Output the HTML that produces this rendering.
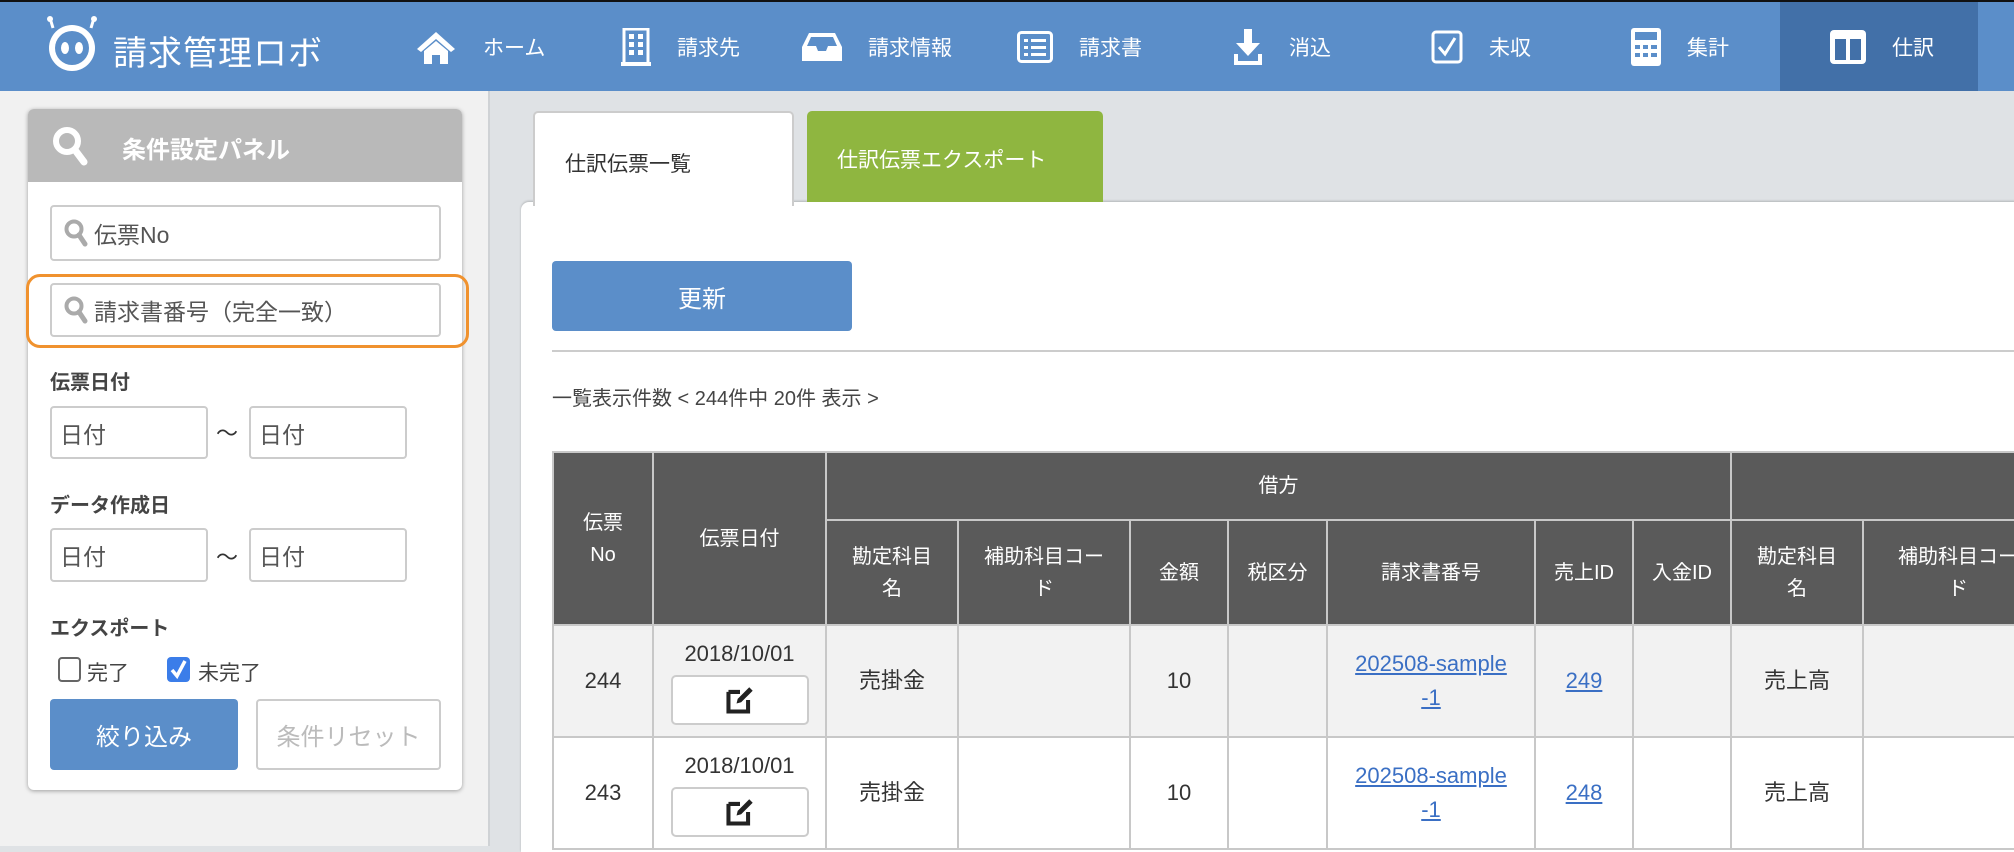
<!DOCTYPE html>
<html><head><meta charset="utf-8"><style>
*{box-sizing:border-box;margin:0;padding:0}
body{width:2014px;height:846px;overflow:hidden;background:#dfe2e5;font-family:"Liberation Sans","Noto Sans CJK JP",sans-serif;position:relative;color:#333}
.a{position:absolute}
#hdr{left:0;top:0;width:2014px;height:91px;background:#5b8ec9;border-top:2px solid #111}
.nav{position:absolute;top:0;height:89px;display:flex;align-items:center;color:#fff;font-size:21px}
.nav svg{margin-right:26px}
#side{left:0;top:91px;width:490px;height:755px;background:#f1f1f1;border-right:2px solid #cfd2d5}
#panel{left:28px;top:109px;width:434px;height:681px;background:#fff;border-radius:6px;box-shadow:0 1px 4px rgba(0,0,0,.35);overflow:hidden}
#ph{left:0;top:0;width:434px;height:73px;background:#b9b9b9;color:#fff;font-weight:bold;font-size:24px}
.inp{position:absolute;background:#fff;border:2px solid #ccc;border-radius:4px;font-size:23px;color:#555;display:flex;align-items:center}
.lbl{position:absolute;font-size:20px;font-weight:bold;color:#444}
table{border-collapse:collapse;position:absolute;left:552px;top:451px;table-layout:fixed;width:1500px}
td,th{border:2px solid #c8c8c8;text-align:center;font-size:20px;font-weight:normal;line-height:32px}
td{font-size:22px;line-height:34px}
th{background:#5a5a5a;color:#fff}
td{color:#333}
a{color:#3a6fc4;text-decoration:underline}
.eb{display:inline-flex;width:138px;height:50px;border:2px solid #ccc;border-radius:5px;background:#fff;align-items:center;justify-content:center;margin-top:4px}
</style></head><body>
<div id="hdr" class="a">
 <div class="a" style="left:44px;top:14px">
  <svg width="56" height="56" viewBox="0 0 56 56"><line x1="9" y1="12" x2="6" y2="2" stroke="#fff" stroke-width="3"/><line x1="47" y1="12" x2="50" y2="2" stroke="#fff" stroke-width="3"/><circle cx="6" cy="3" r="3" fill="#fff"/><circle cx="50" cy="3" r="3" fill="#fff"/><circle cx="28" cy="32" r="23" fill="#fff"/><circle cx="28" cy="32" r="17" fill="#5b8ec9"/><ellipse cx="21" cy="32" rx="4" ry="6" fill="#fff"/><ellipse cx="35" cy="32" rx="4" ry="6" fill="#fff"/></svg>
 </div>
 <div class="a" style="left:113px;top:24px;color:#fff;font-size:34px;letter-spacing:1px">請求管理ロボ</div>
 <div class="nav" style="left:415px"><svg width="42" height="34" viewBox="0 0 42 34"><path d="M21 2 L2 19 L6 22 L21 9 L36 22 L40 19 Z M9 21 V34 H17 V25 H25 V34 H33 V21 L21 11 Z" fill="#fff"/></svg>ホーム</div>
 <div class="nav" style="left:621px"><svg width="30" height="38" viewBox="0 0 30 38"><rect x="3" y="1" width="24" height="35" fill="none" stroke="#fff" stroke-width="3"/><rect x="0" y="34" width="30" height="4" fill="#fff"/><g fill="#fff"><rect x="8" y="6" width="5" height="5"/><rect x="17" y="6" width="5" height="5"/><rect x="8" y="14" width="5" height="5"/><rect x="17" y="14" width="5" height="5"/><rect x="8" y="22" width="5" height="5"/><rect x="17" y="22" width="5" height="5"/></g></svg>請求先</div>
 <div class="nav" style="left:802px"><svg width="40" height="32" viewBox="0 0 40 32"><path d="M7 2 H33 L40 16 V30 H0 V16 Z" fill="#fff"/><path d="M9 6 H31 L35 15 H26 L24 20 H16 L14 15 H5 Z" fill="#5b8ec9"/></svg>請求情報</div>
 <div class="nav" style="left:1017px"><svg width="36" height="32" viewBox="0 0 36 32"><rect x="1.5" y="1.5" width="33" height="29" rx="3" fill="none" stroke="#fff" stroke-width="3"/><g fill="#fff"><rect x="7" y="8" width="4" height="3"/><rect x="14" y="8" width="15" height="3"/><rect x="7" y="15" width="4" height="3"/><rect x="14" y="15" width="15" height="3"/><rect x="7" y="22" width="4" height="3"/><rect x="14" y="22" width="15" height="3"/></g></svg>請求書</div>
 <div class="nav" style="left:1233px"><svg width="30" height="38" viewBox="0 0 30 38"><path d="M11 1 H19 V15 H27 L15 28 L3 15 H11 Z" fill="#fff"/><path d="M3 26 V35 H27 V26" fill="none" stroke="#fff" stroke-width="4"/></svg>消込</div>
 <div class="nav" style="left:1431px"><svg width="32" height="34" viewBox="0 0 32 34"><rect x="2" y="2" width="28" height="30" rx="3" fill="none" stroke="#fff" stroke-width="3"/><path d="M8 17 L14 24 L24 8" fill="none" stroke="#fff" stroke-width="3"/></svg>未収</div>
 <div class="nav" style="left:1631px"><svg width="30" height="38" viewBox="0 0 30 38"><rect x="0" y="0" width="30" height="38" rx="3" fill="#fff"/><rect x="4" y="4" width="22" height="8" fill="#5b8ec9"/><g fill="#5b8ec9"><rect x="4" y="17" width="5" height="4"/><rect x="12" y="17" width="5" height="4"/><rect x="20" y="17" width="6" height="4"/><rect x="4" y="25" width="5" height="4"/><rect x="12" y="25" width="5" height="4"/><rect x="20" y="25" width="6" height="4"/></g></svg>集計</div>
 <div class="a" style="left:1780px;top:0;width:198px;height:89px;background:#4270a8"></div>
 <div class="nav" style="left:1830px"><svg width="36" height="34" viewBox="0 0 36 34"><rect x="0" y="0" width="36" height="34" rx="4" fill="#fff"/><rect x="5" y="9" width="11" height="21" fill="#4270a8"/><rect x="20" y="9" width="11" height="21" fill="#4270a8"/></svg>仕訳</div>
</div>

<div id="side" class="a"></div>
<div id="panel" class="a">
 <div id="ph" class="a"><svg class="a" style="left:24px;top:17px" width="36" height="40" viewBox="0 0 36 40"><circle cx="15" cy="15" r="11" fill="none" stroke="#fff" stroke-width="6"/><line x1="23" y1="24" x2="32" y2="36" stroke="#fff" stroke-width="7" stroke-linecap="round"/></svg><span class="a" style="left:94px;top:21px">条件設定パネル</span></div>
</div>
<div class="inp" style="left:50px;top:205px;width:391px;height:56px"><svg style="margin:0 6px 0 12px" width="24" height="28" viewBox="0 0 24 28"><circle cx="10" cy="10" r="7.5" fill="none" stroke="#aaa" stroke-width="4"/><line x1="15" y1="16" x2="21" y2="25" stroke="#aaa" stroke-width="5" stroke-linecap="round"/></svg>伝票No</div>
<div class="a" style="left:26px;top:274px;width:443px;height:74px;border:3px solid #f0922e;border-radius:14px"></div>
<div class="inp" style="left:50px;top:283px;width:391px;height:54px"><svg style="margin:0 6px 0 12px" width="24" height="28" viewBox="0 0 24 28"><circle cx="10" cy="10" r="7.5" fill="none" stroke="#aaa" stroke-width="4"/><line x1="15" y1="16" x2="21" y2="25" stroke="#aaa" stroke-width="5" stroke-linecap="round"/></svg>請求書番号（完全一致）</div>
<div class="lbl" style="left:50px;top:366px">伝票日付</div>
<div class="inp" style="left:50px;top:406px;width:158px;height:53px;padding-left:8px">日付</div>
<div class="a" style="left:216px;top:416px;font-size:22px">～</div>
<div class="inp" style="left:249px;top:406px;width:158px;height:53px;padding-left:8px">日付</div>
<div class="lbl" style="left:50px;top:489px">データ作成日</div>
<div class="inp" style="left:50px;top:528px;width:158px;height:54px;padding-left:8px">日付</div>
<div class="a" style="left:216px;top:540px;font-size:22px">～</div>
<div class="inp" style="left:249px;top:528px;width:158px;height:54px;padding-left:8px">日付</div>
<div class="lbl" style="left:50px;top:612px">エクスポート</div>
<div class="a" style="left:58px;top:657px;width:23px;height:25px;border:2px solid #666;border-radius:4px;background:#fff"></div>
<div class="a" style="left:87px;top:657px;font-size:21px;color:#444">完了</div>
<div class="a" style="left:167px;top:657px;width:23px;height:25px;border-radius:4px;background:#3b7de9"><svg width="23" height="25" viewBox="0 0 23 25"><path d="M5 13 L10 19 L18 4" fill="none" stroke="#fff" stroke-width="3.5"/></svg></div>
<div class="a" style="left:198px;top:657px;font-size:21px;color:#444">未完了</div>
<div class="a" style="left:50px;top:699px;width:188px;height:71px;background:#5b8ec9;border-radius:4px;color:#fff;font-size:24px;display:flex;align-items:center;justify-content:center">絞り込み</div>
<div class="a" style="left:256px;top:699px;width:185px;height:71px;background:#fff;border:2px solid #ccc;border-radius:4px;color:#bbb;font-size:24px;display:flex;align-items:center;justify-content:center">条件リセット</div>

<div class="a" style="left:521px;top:202px;width:1500px;height:650px;background:#fff;border-radius:8px 0 0 0;box-shadow:0 -1px 2px rgba(0,0,0,.2)"></div>
<div class="a" style="left:533px;top:111px;width:261px;height:95px;background:#fff;border:2px solid #ccc;border-bottom:none;border-radius:5px 5px 0 0;font-size:21px;color:#333;padding:35px 0 0 30px">仕訳伝票一覧</div>
<div class="a" style="left:807px;top:111px;width:296px;height:91px;background:#8fb640;border-radius:5px 5px 0 0;font-size:21px;color:#fff;padding:33px 0 0 30px">仕訳伝票エクスポート</div>
<div class="a" style="left:552px;top:261px;width:300px;height:70px;background:#5b8ec9;border-radius:4px;color:#fff;font-size:24px;display:flex;align-items:center;justify-content:center">更新</div>
<div class="a" style="left:552px;top:350px;width:1470px;height:2px;background:#ccc"></div>
<div class="a" style="left:552px;top:382px;font-size:20px;color:#444">一覧表示件数 &lt; 244件中 20件 表示 &gt;</div>

<table>
<colgroup><col style="width:100px"><col style="width:173px"><col style="width:132px"><col style="width:172px"><col style="width:98px"><col style="width:99px"><col style="width:208px"><col style="width:98px"><col style="width:98px"><col style="width:132px"><col style="width:190px"></colgroup>
<tr style="height:68px"><th rowspan="2">伝票<br>No</th><th rowspan="2">伝票日付</th><th colspan="7">借方</th><th colspan="2"></th></tr>
<tr style="height:105px"><th>勘定科目<br>名</th><th>補助科目コー<br>ド</th><th>金額</th><th>税区分</th><th>請求書番号</th><th>売上ID</th><th>入金ID</th><th>勘定科目<br>名</th><th>補助科目コー<br>ド</th></tr>
<tr style="height:112px;background:#f2f2f2"><td>244</td><td>2018/10/01<br><span class="eb"><svg width="30" height="30" viewBox="0 0 26 26"><path d="M3 6 H13 M3 6 V23 H20 V13" fill="none" stroke="#222" stroke-width="3.5"/><path d="M10 16 L11 12 L21 2 L24 5 L14 15 Z" fill="#222"/></svg></span></td><td>売掛金</td><td></td><td>10</td><td></td><td><a>202508-sample<br>-1</a></td><td><a>249</a></td><td></td><td>売上高</td><td></td></tr>
<tr style="height:112px;background:#fff"><td>243</td><td>2018/10/01<br><span class="eb"><svg width="30" height="30" viewBox="0 0 26 26"><path d="M3 6 H13 M3 6 V23 H20 V13" fill="none" stroke="#222" stroke-width="3.5"/><path d="M10 16 L11 12 L21 2 L24 5 L14 15 Z" fill="#222"/></svg></span></td><td>売掛金</td><td></td><td>10</td><td></td><td><a>202508-sample<br>-1</a></td><td><a>248</a></td><td></td><td>売上高</td><td></td></tr>
</table>
</body></html>
